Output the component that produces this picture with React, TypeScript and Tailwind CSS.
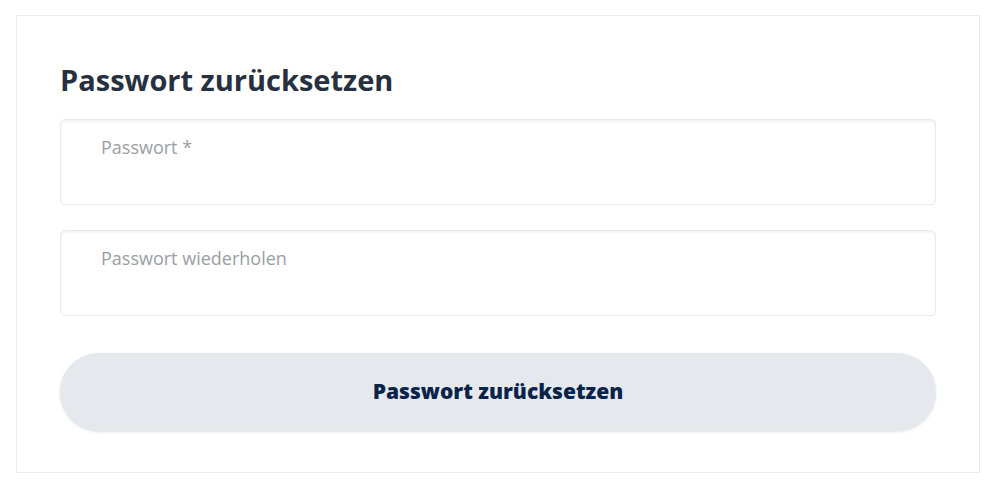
export default function App() {
  return (
    <div className="min-h-screen bg-white pt-[15px] pl-[16px] pr-[20px]">
      <div className="w-[964px] h-[458px] border border-[#ebebeb] bg-white px-[43px] pt-[44px]">
        <h1 className="font-['Open_Sans',sans-serif] font-bold text-[29px] leading-[40px] text-[#27303f]">
          Passwort zurücksetzen
        </h1>
        <form className="mt-[19px] flex flex-col">
          <Field label="Passwort *" />
          <div className="h-[25px]" />
          <Field label="Passwort wiederholen" />
          <button
            type="button"
            className="mt-[37px] h-[78px] w-full rounded-full bg-[#e5e8ed] shadow-[0_1px_3px_rgba(0,0,0,0.12)] font-['Open_Sans',sans-serif] font-extrabold text-[21px] text-[#0a2449]"
          >
            Passwort zurücksetzen
          </button>
        </form>
      </div>
    </div>
  );
}

function Field({ label }: { label: string }) {
  return (
    <label className="block h-[86px] w-full rounded-[5px] border border-[#e9e9e9] bg-white shadow-[inset_0_2px_3px_rgba(0,0,0,0.05)] pl-[40px] pt-[14px]">
      <span className="font-['Open_Sans',sans-serif] text-[18px] leading-[26px] text-[#9a9ea4]">
        {label}
      </span>
    </label>
  );
}
